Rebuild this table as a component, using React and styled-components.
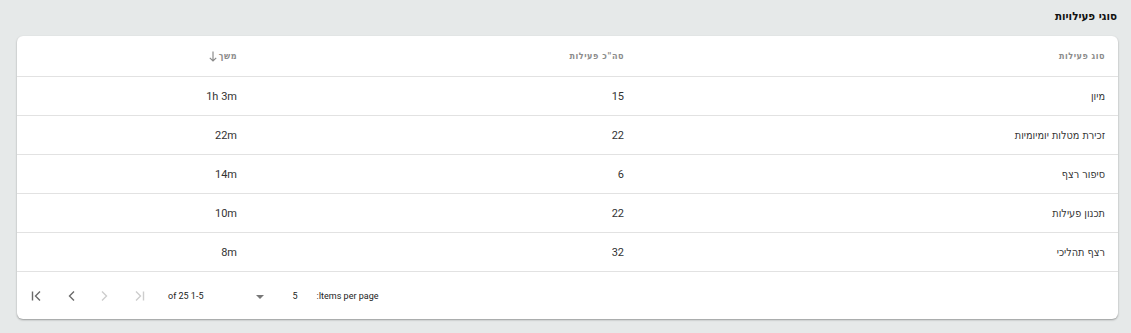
import React from "react";
import styled, { createGlobalStyle } from "styled-components";

const rows = [
  { type: "מיון", total: 15, duration: "1h 3m" },
  { type: "זכירת מטלות יומיומיות", total: 22, duration: "22m" },
  { type: "סיפור רצף", total: 6, duration: "14m" },
  { type: "תכנון פעילות", total: 22, duration: "10m" },
  { type: "רצף תהליכי", total: 32, duration: "8m" },
];

const hebrewFont = `"DejaVu Sans Condensed", "Liberation Sans", sans-serif`;

const GlobalStyle = createGlobalStyle`
  html, body {
    margin: 0;
    background: #e6e9e9;
    font-family: Roboto, "Liberation Sans", sans-serif;
  }
`;

function Chevron({ dir, bar, muted }) {
  const color = muted ? "#cdcdcd" : "#6a6a6a";
  const left = dir === "left";
  return (
    <svg width="12" height="12" viewBox="0 0 12 12" fill="none" stroke={color} strokeWidth="1.4">
      {left ? <path d="M9 1.5 L4.5 6 L9 10.5" /> : <path d="M3 1.5 L7.5 6 L3 10.5" />}
      {bar && (left ? <path d="M1.5 1.5 V10.5" /> : <path d="M10.5 1.5 V10.5" />)}
    </svg>
  );
}

function App() {
  return (
    <Page dir="rtl">
      <GlobalStyle />
      <Title>סוגי פעילויות</Title>
      <Card>
        <HeadRow>
          <HeadCell>סוג פעילות</HeadCell>
          <HeadCell>סה"כ פעילות</HeadCell>
          <HeadCell>
            משך
            <svg width="8" height="11" viewBox="0 0 8 11" fill="none" stroke="#8c8c8c" strokeWidth="1.2">
              <path d="M4 0.5 V10 M0.8 6.8 L4 10 L7.2 6.8" />
            </svg>
          </HeadCell>
        </HeadRow>
        {rows.map((r) => (
          <Row key={r.type}>
            <TypeCell>{r.type}</TypeCell>
            <NumCell>{r.total}</NumCell>
            <NumCell>{r.duration}</NumCell>
          </Row>
        ))}
        <Paginator>
          <PageLabel>Items per page:</PageLabel>
          <Select>
            <span>5</span>
            <Caret />
          </Select>
          <Range>1-5 of 25</Range>
          <Buttons>
            <PageButton><Chevron dir="right" bar muted /></PageButton>
            <PageButton><Chevron dir="right" muted /></PageButton>
            <PageButton><Chevron dir="left" /></PageButton>
            <PageButton><Chevron dir="left" bar /></PageButton>
          </Buttons>
        </Paginator>
      </Card>
    </Page>
  );
}

const Page = styled.div`
  width: 1131px;
  height: 333px;
  box-sizing: border-box;
  padding: 0 13px 0 17px;
`;

const Title = styled.h3`
  margin: 0;
  height: 36px;
  display: flex;
  align-items: center;
  padding: 0 1px 4px 0;
  box-sizing: border-box;
  font-family: ${hebrewFont};
  font-size: 11.5px;
  font-weight: bold;
  color: #111;
`;

const Card = styled.div`
  background: #fff;
  border-radius: 6px;
  box-shadow: 0 1px 2px rgba(0, 0, 0, 0.35);
  overflow: hidden;
`;

const HeadRow = styled.div`
  display: grid;
  grid-template-columns: 494px 387px 1fr;
  height: 41px;
  border-bottom: 1px solid #e2e2e2;
  box-sizing: border-box;
  align-items: center;
`;

const Row = styled(HeadRow)`
  height: 39px;
`;

const HeadCell = styled.div`
  display: flex;
  align-items: center;
  gap: 2px;
  font-family: ${hebrewFont};
  font-size: 9px;
  font-weight: bold;
  letter-spacing: 0.5px;
  color: #8c8c8c;
  &:first-child {
    padding-right: 13px;
  }
`;

const TypeCell = styled.div`
  padding-right: 13px;
  font-family: ${hebrewFont};
  font-size: 10.8px;
  color: #333;
`;

const NumCell = styled.div`
  font-size: 11px;
  color: #333;
`;

const Paginator = styled.div`
  display: flex;
  align-items: center;
  height: 47px;
  padding-left: 3px;
  color: #222;
  font-size: 9px;
`;

const PageLabel = styled.span`
  margin-right: auto;
  margin-left: 19px;
`;

const Select = styled.div`
  width: 41px;
  display: flex;
  align-items: center;
  justify-content: space-between;
`;

const Caret = styled.span`
  width: 0;
  height: 0;
  border-left: 4px solid transparent;
  border-right: 4px solid transparent;
  border-top: 4px solid #777;
  margin-top: 2px;
`;

const Range = styled.span`
  margin: 0 53px 0 12px;
`;

const Buttons = styled.div`
  display: flex;
`;

const PageButton = styled.button`
  width: 34px;
  height: 34px;
  border: none;
  background: none;
  padding: 0;
  display: flex;
  align-items: center;
  justify-content: center;
`;

export default App;
